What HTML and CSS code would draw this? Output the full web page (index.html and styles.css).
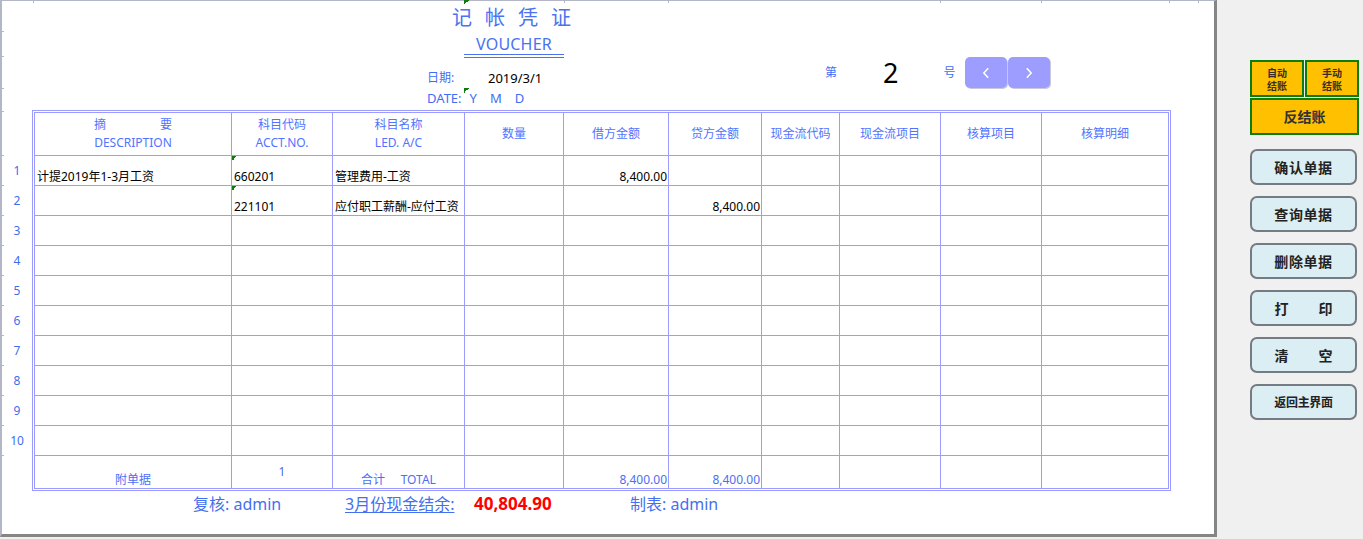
FILE: index.html
```html
<!DOCTYPE html>
<html lang="zh-CN">
<head>
<meta charset="utf-8">
<title>记帐凭证</title>
<link rel="stylesheet" href="styles.css">
</head>
<body>
<div class="app">
  <main class="sheet">
    <span class="mark mark-top"></span>
    <span class="mark mark-date"></span>
    <header class="head">
      <div class="title-block">
        <h1 class="title">记帐凭证</h1>
        <div class="voucher">VOUCHER</div>
        <div class="date-row"><span class="lbl">日期:</span><span class="date">2019/3/1</span></div>
        <div class="date-row2"><span class="lbl2">DATE:</span><span class="y">Y</span><span class="m">M</span><span class="d">D</span></div>
      </div>
      <div class="num-block">
        <span class="di">第</span>
        <span class="no">2</span>
        <span class="hao">号</span>
        <div class="navs">
          <button class="nav" type="button" aria-label="上一张"><svg width="8" height="12" viewBox="0 0 8 12"><polyline points="6.2,1.2 1.8,6 6.2,10.8" fill="none" stroke="#fff" stroke-width="1.5"/></svg></button>
          <button class="nav" type="button" aria-label="下一张"><svg width="8" height="12" viewBox="0 0 8 12"><polyline points="1.8,1.2 6.2,6 1.8,10.8" fill="none" stroke="#fff" stroke-width="1.5"/></svg></button>
        </div>
      </div>
    </header>

    <section class="body-row">
      <div class="rownums">
        <div class="rn">1</div><div class="rn">2</div><div class="rn">3</div><div class="rn">4</div><div class="rn">5</div>
        <div class="rn">6</div><div class="rn">7</div><div class="rn">8</div><div class="rn">9</div><div class="rn">10</div>
      </div>
      <div class="frame">
        <div class="grid">
          <div class="hc"><span class="sp"><span>摘</span><span>要</span></span><span>DESCRIPTION</span></div>
          <div class="hc"><span>科目代码</span><span>ACCT.NO.</span></div>
          <div class="hc"><span>科目名称</span><span>LED. A/C</span></div>
          <div class="hc"><span>数量</span></div>
          <div class="hc"><span>借方金额</span></div>
          <div class="hc"><span>贷方金额</span></div>
          <div class="hc"><span>现金流代码</span></div>
          <div class="hc"><span>现金流项目</span></div>
          <div class="hc"><span>核算项目</span></div>
          <div class="hc"><span>核算明细</span></div>

          <div class="c">计提2019年1-3月工资</div><div class="c flag">660201</div><div class="c">管理费用-工资</div><div class="c"></div><div class="c r">8,400.00</div><div class="c"></div><div class="c"></div><div class="c"></div><div class="c"></div><div class="c"></div>
          <div class="c"></div><div class="c flag">221101</div><div class="c">应付职工薪酬-应付工资</div><div class="c"></div><div class="c"></div><div class="c r">8,400.00</div><div class="c"></div><div class="c"></div><div class="c"></div><div class="c"></div>
          <div class="c"></div><div class="c"></div><div class="c"></div><div class="c"></div><div class="c"></div><div class="c"></div><div class="c"></div><div class="c"></div><div class="c"></div><div class="c"></div>
          <div class="c"></div><div class="c"></div><div class="c"></div><div class="c"></div><div class="c"></div><div class="c"></div><div class="c"></div><div class="c"></div><div class="c"></div><div class="c"></div>
          <div class="c"></div><div class="c"></div><div class="c"></div><div class="c"></div><div class="c"></div><div class="c"></div><div class="c"></div><div class="c"></div><div class="c"></div><div class="c"></div>
          <div class="c"></div><div class="c"></div><div class="c"></div><div class="c"></div><div class="c"></div><div class="c"></div><div class="c"></div><div class="c"></div><div class="c"></div><div class="c"></div>
          <div class="c"></div><div class="c"></div><div class="c"></div><div class="c"></div><div class="c"></div><div class="c"></div><div class="c"></div><div class="c"></div><div class="c"></div><div class="c"></div>
          <div class="c"></div><div class="c"></div><div class="c"></div><div class="c"></div><div class="c"></div><div class="c"></div><div class="c"></div><div class="c"></div><div class="c"></div><div class="c"></div>
          <div class="c"></div><div class="c"></div><div class="c"></div><div class="c"></div><div class="c"></div><div class="c"></div><div class="c"></div><div class="c"></div><div class="c"></div><div class="c"></div>
          <div class="c"></div><div class="c"></div><div class="c"></div><div class="c"></div><div class="c"></div><div class="c"></div><div class="c"></div><div class="c"></div><div class="c"></div><div class="c"></div>

          <div class="c t ctr">附单据</div>
          <div class="c t ctr mid">1</div>
          <div class="c t ctr">合计&nbsp;&nbsp;&nbsp;&nbsp;&nbsp;TOTAL</div>
          <div class="c t"></div>
          <div class="c t r">8,400.00</div>
          <div class="c t r">8,400.00</div>
          <div class="c t"></div><div class="c t"></div><div class="c t"></div><div class="c t"></div>
        </div>
      </div>
    </section>

    <footer class="foot">
      <span class="f1">复核: admin</span>
      <span class="f2">3月份现金结余:</span>
      <span class="f3">40,804.90</span>
      <span class="f4">制表: admin</span>
    </footer>
  </main>

  <aside class="side">
    <div class="close-grid">
      <button class="ybtn" type="button">自动<br>结账</button>
      <button class="ybtn" type="button">手动<br>结账</button>
      <button class="ybtn wide" type="button">反结账</button>
    </div>
    <div class="actions">
      <button class="bbtn" type="button"><span class="tx">确认单据</span></button>
      <button class="bbtn" type="button"><span class="tx">查询单据</span></button>
      <button class="bbtn" type="button"><span class="tx">删除单据</span></button>
      <button class="bbtn" type="button"><span class="spread"><span>打</span><span>印</span></span></button>
      <button class="bbtn" type="button"><span class="spread"><span>清</span><span>空</span></span></button>
      <button class="bbtn" type="button"><span class="tx small">返回主界面</span></button>
    </div>
  </aside>
</div>
</body>
</html>
```

FILE: styles.css
```css
* { box-sizing: border-box; }

html, body {
  margin: 0;
  padding: 0;
}

body {
  width: 1363px;
  height: 539px;
  overflow: hidden;
  background: #f0f0f0;
  font-family: "Noto Sans", "Noto Sans CJK SC", sans-serif;
  color: #000;
}

button {
  font-family: inherit;
  margin: 0;
  padding: 0;
  cursor: pointer;
}

.app {
  display: flex;
  height: 539px;
}

/* ---------- sheet ---------- */
.sheet {
  position: relative;
  flex: none;
  width: 1217px;
  height: 537px;
  background-color: #fff;
  border-top: 1px solid #b3b6c6;
  border-left: 2px solid #b3b6c6;
  border-right: 3px solid #858585;
  border-bottom: 3px solid #858585;
  background-image:
    linear-gradient(#b3b6c6, #b3b6c6),
    linear-gradient(#b3b6c6, #b3b6c6),
    linear-gradient(#b3b6c6, #b3b6c6),
    linear-gradient(#b3b6c6, #b3b6c6),
    linear-gradient(#b3b6c6, #b3b6c6),
    linear-gradient(#b3b6c6, #b3b6c6),
    linear-gradient(#b3b6c6, #b3b6c6),
    linear-gradient(#b3b6c6, #b3b6c6),
    linear-gradient(#b3b6c6, #b3b6c6),
    linear-gradient(#b3b6c6, #b3b6c6),
    linear-gradient(#b3b6c6, #b3b6c6),
    repeating-linear-gradient(to bottom, #b3b6c6 0 1px, transparent 1px 30px);
  background-repeat: no-repeat;
  background-position:
    31px 0, 562px 0, 666px 0, 938px 0, 1039px 0, 1167px 0, 1196px 0,
    0 30px, 0 55px, 0 87px, 0 110px,
    0 154px;
  background-size:
    1px 2px, 1px 2px, 1px 2px, 1px 2px, 1px 2px, 1px 2px, 1px 2px,
    2px 1px, 2px 1px, 2px 1px, 2px 1px,
    2px 301px;
}

.mark {
  position: absolute;
  width: 5px;
  height: 5px;
  background: linear-gradient(135deg, #107a10 50%, transparent 50%);
}
.mark-top { left: 462px; top: -1px; }
.mark-date { left: 462px; top: 87px; }

/* ---------- header ---------- */
.head {
  display: flex;
  height: 109px;
}

.title-block {
  margin-left: 425px;
  width: 169px;
  display: flex;
  flex-direction: column;
  align-items: flex-start;
  color: #4470f0;
}

.title {
  margin: 6px 0 0 25px;
  font-family: "Noto Sans CJK SC", sans-serif;
  font-size: 20px;
  line-height: 20px;
  font-weight: 400;
  letter-spacing: 13px;
  white-space: nowrap;
  color: #4a72f2;
}

.voucher {
  margin: 9px 0 0 37px;
  width: 100px;
  text-align: center;
  font-size: 16px;
  line-height: 16px;
  letter-spacing: 0.2px;
  padding-bottom: 2px;
  border-bottom: 4px double #4a72f2;
  color: #4a72f2;
}

.date-row {
  margin-top: 12px;
  display: flex;
  font-size: 12px;
  line-height: 16px;
}
.lbl { width: 61px; color: #3f6df5; }
.date { color: #000; font-size: 13px; }

.date-row2 {
  margin-top: 3px;
  display: flex;
  font-size: 13px;
  line-height: 18px;
  color: #3f6df5;
}
.y { margin-left: 8px; }
.m { margin-left: 13px; }
.d { margin-left: 13px; }

.num-block {
  margin: 56px 0 0 229px;
  height: 31px;
  display: flex;
  align-items: center;
}
.di, .hao {
  font-size: 12px;
  line-height: 16px;
  color: #3f6df5;
}
.no {
  margin-left: 46px;
  font-size: 27px;
  line-height: 31px;
  color: #000;
}
.hao { margin-left: 45px; }

.navs {
  margin-left: 10px;
  display: flex;
  gap: 1px;
}
.nav {
  width: 42px;
  height: 31px;
  border: 0;
  border-radius: 5px;
  background: #9d9dff;
  box-shadow: 1px 1px 0 #c9c9dc;
  display: flex;
  align-items: center;
  justify-content: center;
}
.nav svg { display: block; }

/* ---------- table ---------- */
.body-row {
  display: flex;
  align-items: flex-start;
}

.rownums {
  width: 30px;
  padding-top: 45px;
  display: flex;
  flex-direction: column;
}
.rn {
  height: 30px;
  display: flex;
  align-items: center;
  justify-content: center;
  font-size: 12px;
  color: #3f6df0;
}

.frame {
  border: 1px solid #9c9cff;
  padding: 1px;
  background: #fff;
}

.grid {
  display: grid;
  grid-template-columns: 196px 100px 131px 98px 104px 92px 77px 100px 100px 126px;
  grid-template-rows: 42px repeat(10, 29px) 32px;
  gap: 1px;
  padding: 1px;
  background: #9c9cff;
}
.grid > div { background-color: #fff; }

.hc {
  display: flex;
  flex-direction: column;
  align-items: center;
  justify-content: center;
  font-size: 12px;
  line-height: 18px;
  color: #5273ff;
  white-space: nowrap;
}
.sp {
  display: flex;
  justify-content: space-between;
  width: 78px;
}

.c {
  display: flex;
  align-items: flex-end;
  padding: 0 2px;
  font-size: 12px;
  line-height: 16px;
  white-space: nowrap;
  overflow: hidden;
  color: #000;
}
.c.r { justify-content: flex-end; padding-right: 1px; }
.c.ctr { justify-content: center; }
.c.mid { align-items: center; }
.c.t { color: #4a6ff5; }

.flag {
  background-image: linear-gradient(135deg, #107a10 50%, transparent 50%);
  background-repeat: no-repeat;
  background-size: 5px 5px;
}

/* ---------- footer ---------- */
.foot {
  display: flex;
  margin-top: 2px;
  padding-left: 191px;
  font-size: 16px;
  line-height: 22px;
  color: #4470f0;
  white-space: nowrap;
}
.f1 { width: 152px; }
.f2 { width: 129px; text-decoration: underline; text-underline-offset: 2px; }
.f3 { width: 156px; color: #ff0000; font-weight: 700; font-size: 17px; }

/* ---------- side panel ---------- */
.side {
  flex: 1;
  padding: 60px 0 0 33px;
  display: flex;
  flex-direction: column;
}

.close-grid {
  display: grid;
  grid-template-columns: 54px 54px;
  grid-template-rows: 37px 37px;
  gap: 1px;
  width: 109px;
}
.ybtn {
  background: #ffc000;
  border: 2px solid #0b7d0b;
  display: flex;
  align-items: center;
  justify-content: center;
  text-align: center;
  font-family: "Noto Sans CJK SC", sans-serif;
  font-size: 10px;
  line-height: 13px;
  font-weight: 700;
  color: #3a2e24;
}
.ybtn.wide {
  grid-column: 1 / 3;
  font-size: 14px;
  color: #333;
}

.actions {
  margin-top: 14px;
  display: flex;
  flex-direction: column;
  gap: 11px;
}
.bbtn {
  width: 107px;
  height: 36px;
  background: #dbeef4;
  border: 2px solid #767a82;
  border-radius: 7px;
  display: flex;
  align-items: center;
  justify-content: center;
  font-family: "Noto Sans CJK SC", sans-serif;
  font-size: 14px;
  line-height: 16px;
  font-weight: 700;
  color: #222;
}
.tx { letter-spacing: 0.6px; }
.tx.small { font-size: 12px; letter-spacing: -0.3px; }
.spread {
  display: flex;
  justify-content: space-between;
  width: 58px;
}
```
